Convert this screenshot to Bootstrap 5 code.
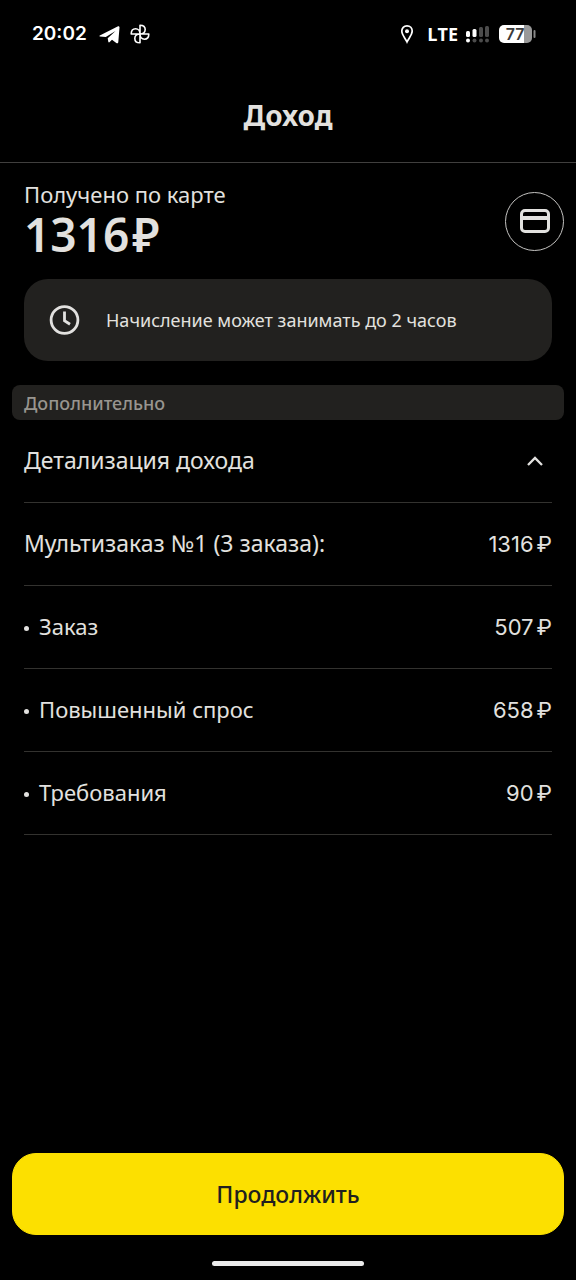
<!DOCTYPE html>
<html lang="ru" data-bs-theme="dark">
<head>
<meta charset="utf-8">
<meta name="viewport" content="width=device-width, initial-scale=1">
<title>Доход</title>
<link href="https://cdn.jsdelivr.net/npm/bootstrap@5.3.0/dist/css/bootstrap.min.css" rel="stylesheet">
<style>
  body { background: #000; color: #e2e1df; font-family: "Noto Sans", "Open Sans", sans-serif; font-size: 23px; line-height: 32px; }
  .status-bar { height: 68px; padding: 0 40px 0 32px; color: #fff; font-family: Inter, "Noto Sans", sans-serif; font-size: 19px; font-weight: 600; }
  .network { font-family: "Open Sans", sans-serif; font-size: 18px; font-weight: 700; }
  .app-header { height: 95px; border-bottom: 1px solid #403f3e; }
  .app-header h1 { color: inherit; font-size: 28px; line-height: 40px; font-weight: 700; }
  .summary { padding: 16px 12px 16px 24px; min-height: 116px; }
  .summary-label { font-size: 22px; line-height: 30px; }
  .summary-total { font-size: 46px; line-height: 50px; font-weight: 600; }
  .currency { margin-left: 3px; }
  .card-btn { width: 59px; height: 59px; border: 1px solid #c4c3c1; color: #e2e1df; }
  .notice { margin: 0 24px 24px; min-height: 82px; padding: 0 24px; gap: 24px; border-radius: 24px; background: #22211f; font-size: 18px; line-height: 28px; }
  .section-title { margin: 0 12px; padding: 0 12px; height: 35px; border-radius: 8px; background: #22211f; color: #98958f; font-size: 18px; line-height: 36px; font-weight: 500; }
  .detail-row { min-height: 83px; padding: 0 0 2px; border: 0; border-bottom: 1px solid #33322f; color: inherit; }
  .detail-item { gap: 10px; font-size: 22px; }
  .amount { padding-top: 2px; font-family: Inter, "Noto Sans", sans-serif; font-size: 22px; }
  .bullet-dot { width: 5px; height: 5px; background: #e2e1df; }
  .bottom-bar { padding: 0 12px 14px; gap: 26px; }
  .btn-continue { min-height: 82px; border-radius: 24px; font-size: 23px; font-weight: 500; --bs-btn-bg: #fce000; --bs-btn-color: #21201f; --bs-btn-border-color: #fce000; --bs-btn-hover-bg: #f0d500; --bs-btn-hover-color: #21201f; --bs-btn-active-bg: #e6cc00; --bs-btn-active-color: #21201f; }
  .home-bar { width: 152px; height: 5px; background: #ebebeb; }
</style>
</head>
<body>
<div class="d-flex flex-column min-vh-100">
  <div class="status-bar d-flex align-items-center justify-content-between">
    <div class="d-flex align-items-center gap-2">
      <span>20:02</span>
      <svg class="ms-1" width="22" height="20" viewBox="0 0 22 20" fill="#fff" aria-hidden="true"><path d="M.8 11.500 18.600 2.400c1.200-.6 2 0 1.900 1.200L19.300 18c-.1 1.300-.9 1.700-2 1L13 15.800l-2.300 2.300c-.6.600-1.200.4-1.400-.4l-.6-3.400L16.500 7 6.800 12.900.9 12.400c-.6-.1-.7-.6-.1-.9z"/></svg>
      <svg width="22" height="22" viewBox="0 0 22 22" fill="none" stroke="#fff" stroke-width="1.600" stroke-linejoin="round" aria-hidden="true"><path d="M11 11V2.200c3.200 0 5.200 1.800 5.200 4.400S14 11 11 11zM11 11H2.200c0-3.200 1.800-5.200 4.400-5.200S11 8 11 11zM11 11v8.800c-3.200 0-5.200-1.800-5.200-4.400S8 11 11 11zM11 11h8.800c0 3.200-1.800 5.200-4.400 5.200S11 14 11 11z"/></svg>
    </div>
    <div class="d-flex align-items-center gap-2">
      <svg class="me-1" width="16" height="20" viewBox="0 0 16 20" aria-hidden="true"><path d="M8 1.800c3.200 0 5.200 2.400 5.200 5.300 0 3.700-3.200 6.700-5.200 10.900C6 13.800 2.800 10.800 2.800 7.100 2.800 4.200 4.800 1.800 8 1.800z" fill="none" stroke="#fff" stroke-width="1.700"/><circle cx="8" cy="7.200" r="2" fill="#fff"/></svg>
      <span class="network">LTE</span>
      <svg width="24" height="18" viewBox="0 0 24 18" aria-hidden="true"><g fill="#fff"><rect x="0" y="6" width="4" height="6" rx="1.500"/><rect x="6.500" y="4" width="4" height="8" rx="1.500"/><circle cx="2" cy="15.500" r="2"/></g><g fill="#4c4c4c"><rect x="13" y="2" width="4" height="10" rx="1.500"/><rect x="19" y="1" width="4" height="11" rx="1.500"/><circle cx="8.500" cy="15.500" r="2"/><circle cx="15" cy="15.500" r="2"/><circle cx="21" cy="15.500" r="2"/></g></svg>
      <svg width="38" height="20" viewBox="0 0 38 20" role="img" aria-label="Заряд 77%"><path d="M6 1h20v18H6a5 5 0 0 1-5-5V6a5 5 0 0 1 5-5z" fill="#fff"/><path d="M26 1h3a5 5 0 0 1 5 5v8a5 5 0 0 1-5 5h-3z" fill="#999"/><rect x="35.500" y="6" width="2" height="8" rx="1" fill="#888"/><text x="17" y="16" text-anchor="middle" font-family="Inter, sans-serif" font-size="16" font-weight="600" fill="#3a3a3a">77</text></svg>
    </div>
  </div>

  <header class="app-header d-flex align-items-center justify-content-center">
    <h1 class="m-0">Доход</h1>
  </header>

  <main class="flex-grow-1">
    <section class="summary d-flex align-items-start justify-content-between">
      <div>
        <div class="summary-label">Получено по карте</div>
        <div class="summary-total">1316<span class="currency">₽</span></div>
      </div>
      <button type="button" class="card-btn btn rounded-circle p-0 d-flex align-items-center justify-content-center align-self-center" aria-label="Карта">
        <svg width="32" height="26" viewBox="0 0 32 26" fill="none" stroke="currentColor" stroke-width="3" aria-hidden="true"><rect x="2.500" y="2.500" width="27" height="21" rx="3.500"/><path d="M2.500 10h27" stroke-width="4"/></svg>
      </button>
    </section>

    <div class="notice d-flex align-items-center">
      <svg class="flex-shrink-0" width="34" height="34" viewBox="0 0 34 34" fill="none" stroke="currentColor" stroke-width="2.800" aria-hidden="true"><circle cx="16.500" cy="17" r="13.400"/><path d="M16.500 8.500v9.300l5.500 3.500"/></svg>
      <span>Начисление может занимать до 2 часов</span>
    </div>

    <h2 class="section-title">Дополнительно</h2>

    <div class="px-4">
      <button type="button" class="detail-row w-100 bg-transparent d-flex align-items-center justify-content-between" data-bs-toggle="collapse" data-bs-target="#income-details" aria-expanded="true" aria-controls="income-details">
        <span>Детализация дохода</span>
        <svg class="me-2" width="18" height="14" viewBox="0 0 18 14" fill="none" stroke="currentColor" stroke-width="2.300" aria-hidden="true"><path d="M2 12l7-7 7 7"/></svg>
      </button>
      <ul id="income-details" class="collapse show list-unstyled m-0">
        <li class="detail-row d-flex align-items-center justify-content-between"><span>Мультизаказ №1 (3 заказа):</span><span class="amount">1316<span class="currency">₽</span></span></li>
        <li class="detail-row d-flex align-items-center justify-content-between"><span class="detail-item d-flex align-items-center"><i class="bullet-dot rounded-circle mt-1"></i>Заказ</span><span class="amount">507<span class="currency">₽</span></span></li>
        <li class="detail-row d-flex align-items-center justify-content-between"><span class="detail-item d-flex align-items-center"><i class="bullet-dot rounded-circle mt-1"></i>Повышенный спрос</span><span class="amount">658<span class="currency">₽</span></span></li>
        <li class="detail-row d-flex align-items-center justify-content-between"><span class="detail-item d-flex align-items-center"><i class="bullet-dot rounded-circle mt-1"></i>Требования</span><span class="amount">90<span class="currency">₽</span></span></li>
      </ul>
    </div>
  </main>

  <footer class="bottom-bar d-flex flex-column align-items-center">
    <button type="button" class="btn btn-continue w-100">Продолжить</button>
    <div class="home-bar rounded-pill"></div>
  </footer>
</div>
<script src="https://cdn.jsdelivr.net/npm/bootstrap@5.3.0/dist/js/bootstrap.bundle.min.js"></script>
</body>
</html>
